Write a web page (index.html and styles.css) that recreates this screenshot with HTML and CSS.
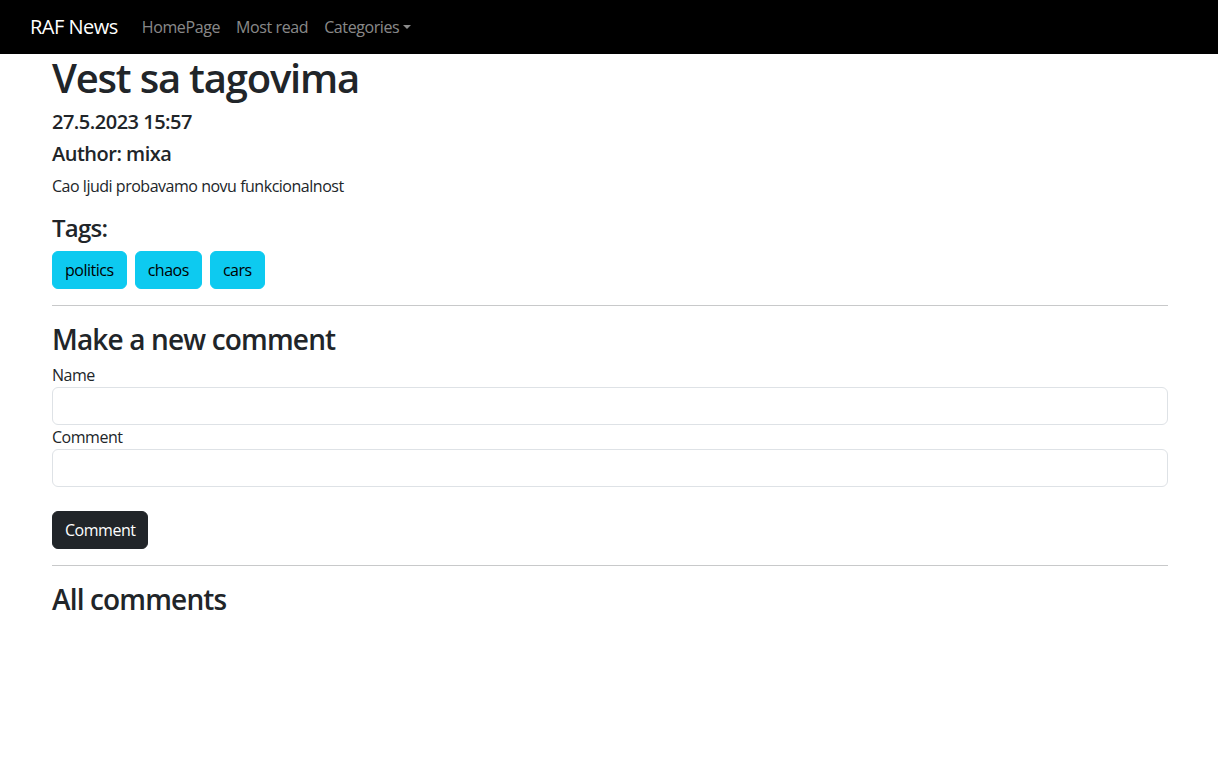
FILE: index.html
```html
<!DOCTYPE html>
<html lang="en">
<head>
<meta charset="utf-8">
<title>RAF News</title>
<link rel="stylesheet" href="styles.css">
</head>
<body>
<nav class="navbar">
  <a class="brand" href="#">RAF News</a>
  <ul class="nav">
    <li><a class="nav-link" href="#">HomePage</a></li>
    <li><a class="nav-link" href="#">Most read</a></li>
    <li><a class="nav-link dropdown" href="#">Categories</a></li>
  </ul>
</nav>
<main class="container">
  <h1 class="title">Vest sa tagovima</h1>
  <h5 class="sub">27.5.2023 15:57</h5>
  <h5 class="sub">Author: mixa</h5>
  <p class="text">Cao ljudi probavamo novu funkcionalnost</p>
  <h4 class="h4">Tags:</h4>
  <div class="tags">
    <button class="btn btn-info">politics</button>
    <button class="btn btn-info">chaos</button>
    <button class="btn btn-info">cars</button>
  </div>
  <hr class="rule">
  <h3 class="h3">Make a new comment</h3>
  <form class="form">
    <label class="label" for="name">Name</label>
    <input class="input" id="name" type="text">
    <label class="label" for="comment">Comment</label>
    <input class="input" id="comment" type="text">
    <div class="actions">
      <button class="btn btn-dark" type="button">Comment</button>
    </div>
  </form>
  <hr class="rule">
  <h3 class="h3">All comments</h3>
</main>
</body>
</html>
```
FILE: styles.css
```css
* { box-sizing: border-box; }
html, body { margin: 0; padding: 0; }
body {
  font-family: "Open Sans", "Noto Sans", sans-serif;
  font-size: 16px;
  line-height: 1.5;
  color: #212529;
  background: #fff;
}
.navbar {
  height: 54px;
  background: #000;
  display: flex;
  align-items: center;
  padding: 0 30px;
}
.brand {
  color: #fff;
  font-size: 20px;
  text-decoration: none;
  margin-right: 16px;
  line-height: 30px;
  letter-spacing: -0.025em;
}
.nav {
  display: flex;
  list-style: none;
  margin: 0;
  padding: 0;
}
.nav-link {
  display: block;
  padding: 8px;
  color: rgba(255,255,255,.55);
  text-decoration: none;
  letter-spacing: -0.025em;
}
.dropdown::after {
  content: "";
  display: inline-block;
  margin-left: .255em;
  vertical-align: .255em;
  border-top: .3em solid;
  border-right: .3em solid transparent;
  border-left: .3em solid transparent;
}
.container {
  padding: 0 50px 0 52px;
}
.title, .sub, .h4, .h3 {
  margin: 0 0 8px;
  font-weight: 600;
  line-height: 1.2;
  letter-spacing: -0.03em;
}
.title { font-size: 40px; }
.sub { font-size: 20px; letter-spacing: -0.025em; }
.h4 { font-size: 24px; }
.h3 { font-size: 28px; letter-spacing: -0.03em; padding-top: 1px; margin-bottom: 7px; }
.text { margin: 0 0 16px; letter-spacing: -0.03em; }
.tags { display: flex; gap: 8px; }
.btn {
  font-family: inherit;
  font-size: 16px;
  line-height: 24px;
  padding: 6px 12px;
  border: 1px solid transparent;
  border-radius: 6px;
  cursor: pointer;
  letter-spacing: -0.03em;
}
.btn-info { background: #0dcaf0; border-color: #0dcaf0; color: #000; }
.btn-dark { background: #212529; border-color: #212529; color: #fff; }
.rule {
  margin: 16px 0;
  border: 0;
  border-top: 1px solid #c8c9ca;
}
.form { display: flex; flex-direction: column; }
.label { display: block; letter-spacing: -0.03em; }
.input {
  display: block;
  width: 100%;
  height: 38px;
  padding: 6px 12px;
  font-family: inherit;
  font-size: 16px;
  border: 1px solid #dee2e6;
  border-radius: 6px;
  background: #fff;
}
.actions { margin-top: 24px; }
```
